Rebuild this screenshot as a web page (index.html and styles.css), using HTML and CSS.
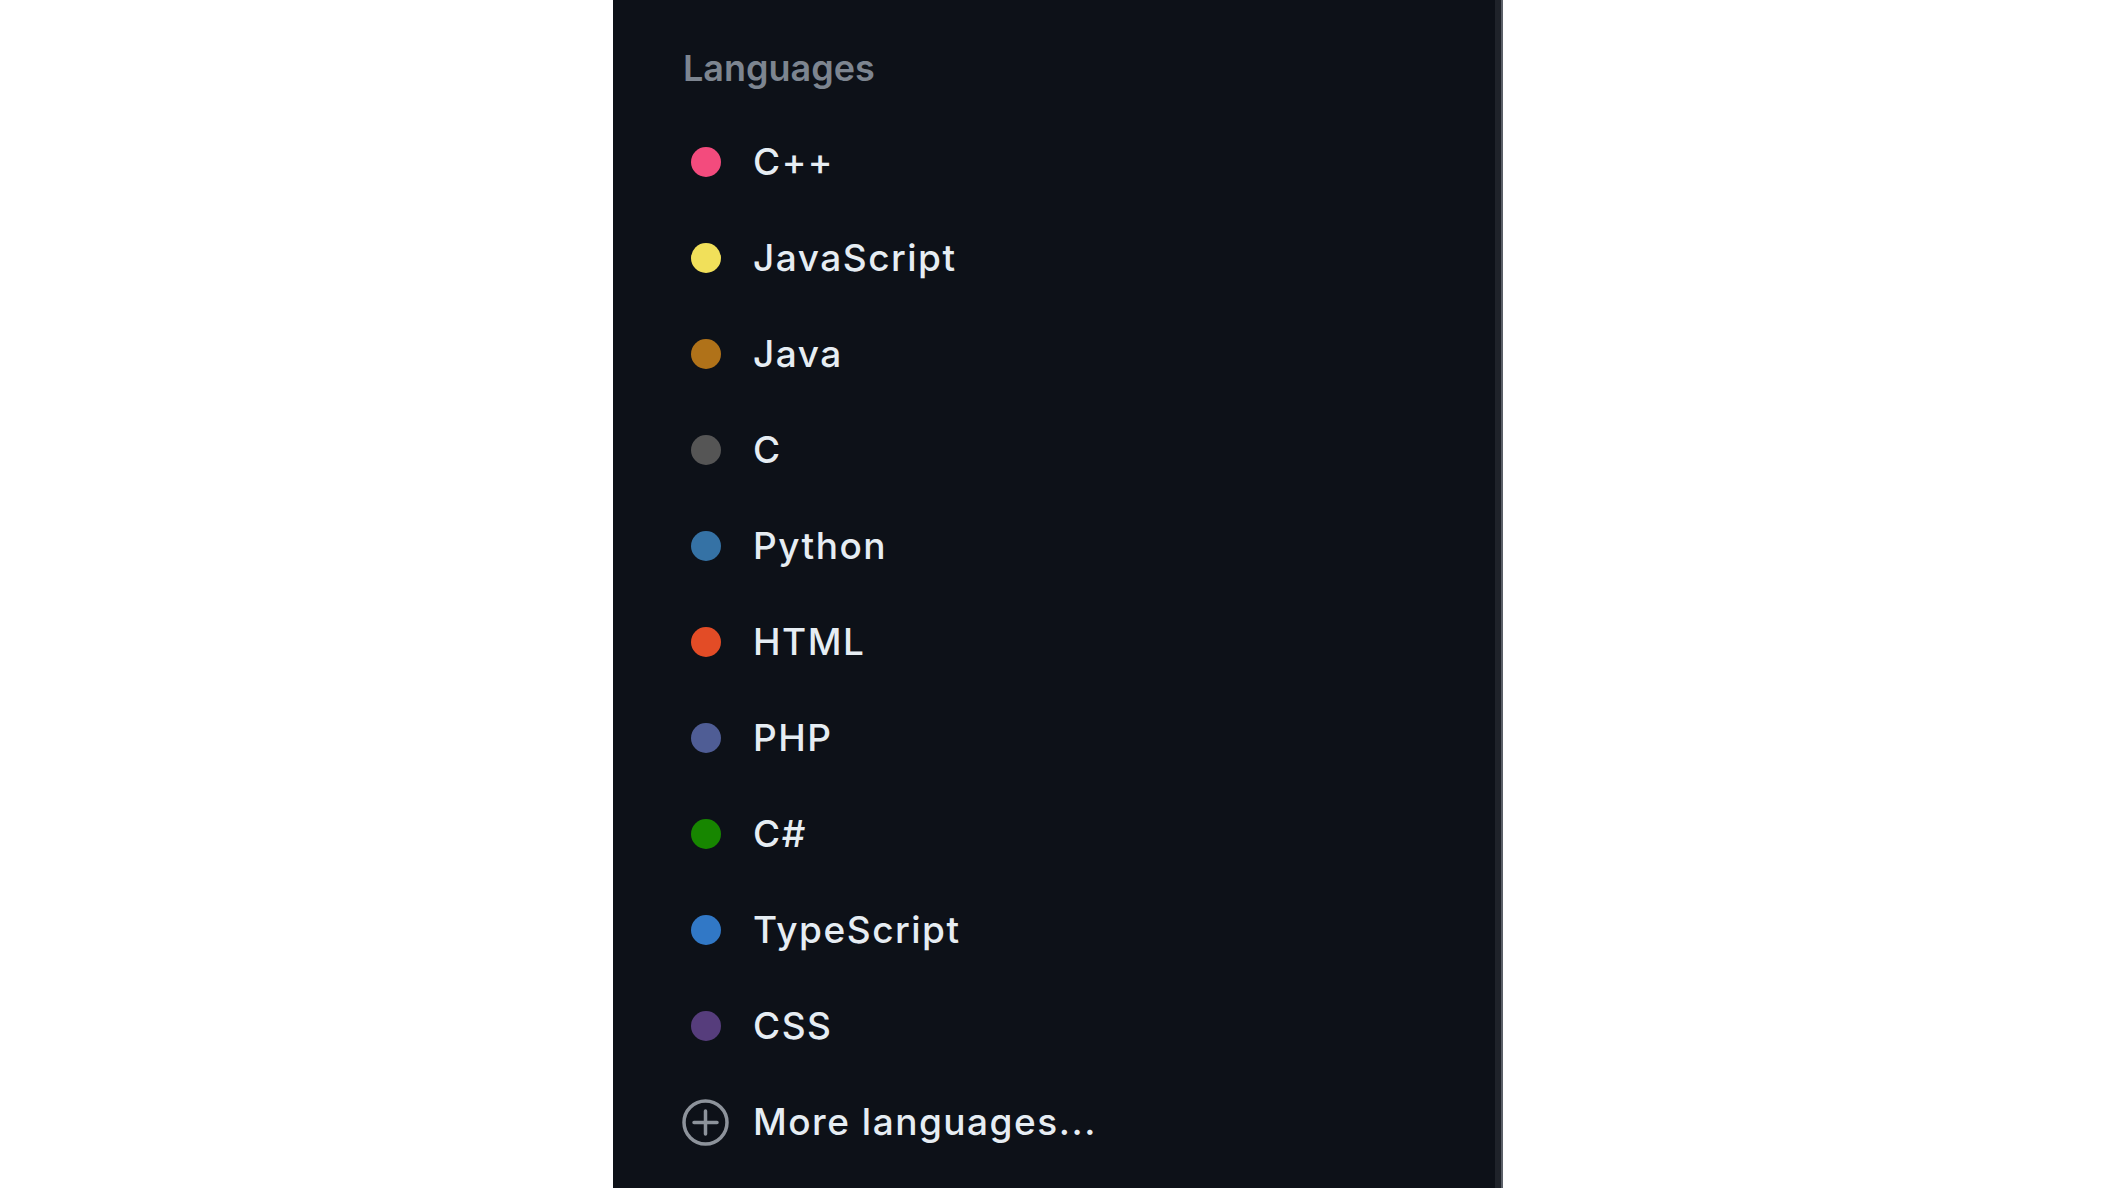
FILE: index.html
```html
<!DOCTYPE html>
<html lang="en">
<head>
<meta charset="utf-8">
<title>Languages</title>
<link rel="stylesheet" href="styles.css">
</head>
<body>
<div class="panel">
  <div class="header">Languages</div>
  <ul class="list">
    <li class="row"><span class="mark"><span class="dot" style="background:#f34b7d"></span></span><span class="label">C++</span></li>
    <li class="row"><span class="mark"><span class="dot" style="background:#f1e05a"></span></span><span class="label">JavaScript</span></li>
    <li class="row"><span class="mark"><span class="dot" style="background:#b07219"></span></span><span class="label">Java</span></li>
    <li class="row"><span class="mark"><span class="dot" style="background:#555555"></span></span><span class="label">C</span></li>
    <li class="row"><span class="mark"><span class="dot" style="background:#3572a5"></span></span><span class="label">Python</span></li>
    <li class="row"><span class="mark"><span class="dot" style="background:#e34c26"></span></span><span class="label">HTML</span></li>
    <li class="row"><span class="mark"><span class="dot" style="background:#4f5d95"></span></span><span class="label">PHP</span></li>
    <li class="row"><span class="mark"><span class="dot" style="background:#178600"></span></span><span class="label">C#</span></li>
    <li class="row"><span class="mark"><span class="dot" style="background:#3178c6"></span></span><span class="label">TypeScript</span></li>
    <li class="row"><span class="mark"><span class="dot" style="background:#563d7c"></span></span><span class="label">CSS</span></li>
    <li class="row"><span class="mark"><svg class="plus" width="47" height="47" viewBox="0 0 47 47"><circle cx="23.5" cy="23.5" r="21.5" fill="none" stroke="#8d939b" stroke-width="3.5"/><path d="M23.5 12v23M12 23.5h23" stroke="#8d939b" stroke-width="3.5" stroke-linecap="round"/></svg></span><span class="label">More languages...</span></li>
  </ul>
</div>
</body>
</html>
```
FILE: styles.css
```css
html, body {
  margin: 0;
  padding: 0;
  background: #ffffff;
  height: 100%;
}
body {
  font-family: Inter, "Liberation Sans", Arial, sans-serif;
}
.panel {
  margin-left: 613px;
  width: 888px;
  height: 1188px;
  background: #0d1118;
  border-right: 6px solid #1f232a;
  box-shadow: 2px 0 0 #5b6068;
  padding-top: 48px;
  box-sizing: border-box;
}
.header {
  padding-left: 70px;
  height: 40px;
  line-height: 40px;
  font-size: 36px;
  font-weight: 600;
  color: #7d8590;
}
.list {
  list-style: none;
  margin: 26px 0 0 0;
  padding: 0 0 0 69px;
}
.row {
  display: flex;
  align-items: center;
  height: 96px;
  gap: 24px;
}
.mark {
  width: 47px;
  height: 47px;
  display: flex;
  align-items: center;
  justify-content: center;
  flex: none;
}
.dot {
  width: 30px;
  height: 30px;
  border-radius: 50%;
}
.plus {
  display: block;
}
.label {
  font-size: 37px;
  font-weight: 500;
  color: #e6edf3;
  line-height: 1.21;
  letter-spacing: 1.5px;
}
```
